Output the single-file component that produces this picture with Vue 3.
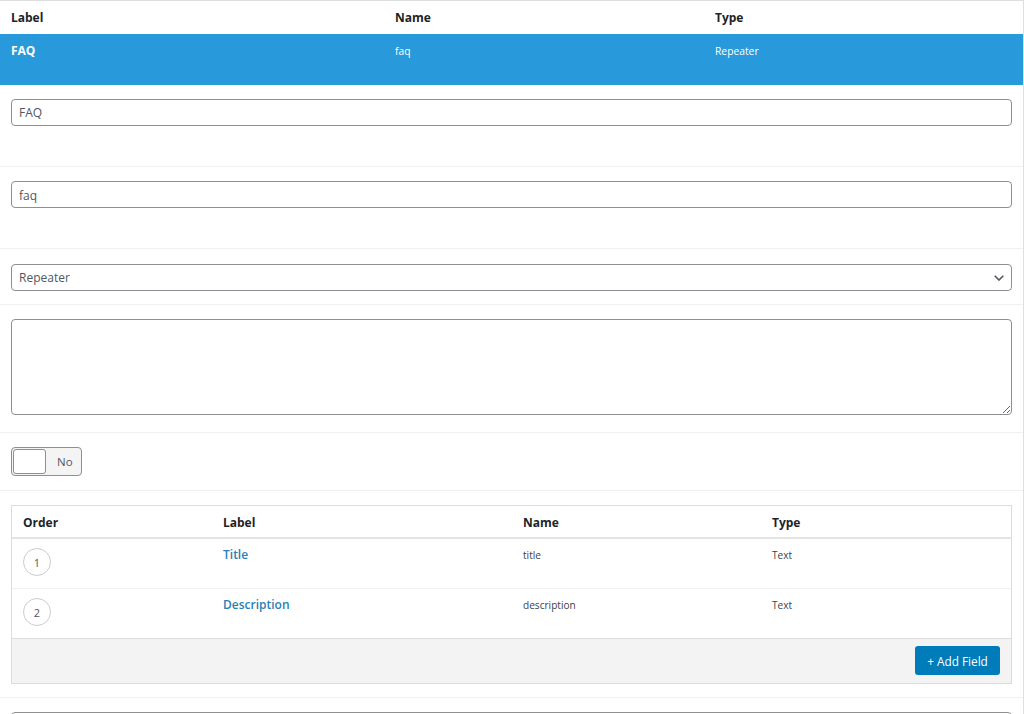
<script setup>
const fields = [
  { order: 1, label: 'Title', name: 'title', type: 'Text' },
  { order: 2, label: 'Description', name: 'description', type: 'Text' },
]
</script>

<template>
  <div class="page">
    <div class="top-head">
      <div>Label</div>
      <div>Name</div>
      <div>Type</div>
    </div>
    <div class="top-row">
      <div class="top-label">FAQ</div>
      <div>faq</div>
      <div>Repeater</div>
    </div>

    <div class="field tall">
      <input class="control" type="text" value="FAQ" />
    </div>
    <div class="field tall">
      <input class="control second" type="text" value="faq" />
    </div>
    <div class="field select-field">
      <div class="select-wrap">
        <select class="control select">
          <option>Repeater</option>
        </select>
        <svg class="chevron" viewBox="0 0 10 6" width="10" height="6">
          <path d="M.7.7 5 5 9.3.7" fill="none" stroke="#50575e" stroke-width="1.6" />
        </svg>
      </div>
    </div>
    <div class="field area-field">
      <textarea class="control area"></textarea>
    </div>
    <div class="field toggle-field">
      <div class="toggle">
        <span class="knob"></span>
        <span class="toggle-text">No</span>
      </div>
    </div>
    <div class="field table-field">
      <div class="table">
        <div class="t-row t-head">
          <div>Order</div>
          <div>Label</div>
          <div>Name</div>
          <div>Type</div>
        </div>
        <div v-for="f in fields" :key="f.order" class="t-row t-body">
          <div><span class="circle">{{ f.order }}</span></div>
          <div class="link-cell"><a class="link">{{ f.label }}</a></div>
          <div class="small">{{ f.name }}</div>
          <div class="small">{{ f.type }}</div>
        </div>
        <div class="t-foot">
          <button class="add" type="button">+ Add Field</button>
        </div>
      </div>
    </div>
    <div class="field last">
      <input class="control" type="text" />
    </div>
  </div>
</template>

<style>
html, body {
  background: #fff;
  overflow: hidden;
}
</style>

<style scoped>
.page {
  height: 714px;
  overflow: hidden;
  box-sizing: border-box;
  background: #fff;
  border-top: 1px solid #dfdfdf;
  border-right: 1px solid #dfdfdf;
  font-family: "Open Sans", "Noto Sans", sans-serif;
  color: #1d2327;
}
.top-head,
.top-row {
  display: grid;
  grid-template-columns: 384px 320px 1fr;
  padding-left: 11px;
}
.top-head {
  height: 33px;
  align-items: center;
  font-size: 12px;
  font-weight: 700;
  line-height: 34px;
}
.top-row {
  height: 51px;
  box-sizing: border-box;
  padding-top: 8px;
  background: #2899da;
  color: #fff;
  font-size: 10.3px;
  line-height: 18px;
}
.top-label {
  font-size: 12px;
  font-weight: 700;
}
.field {
  box-sizing: border-box;
  padding: 14px 11px;
  border-bottom: 1px solid #f0f0f1;
}
.field.tall {
  height: 82px;
}
.field.last {
  border-bottom: 0;
}
.control {
  display: block;
  box-sizing: border-box;
  width: 100%;
  height: 27px;
  margin: 0;
  padding: 0 7px;
  border: 1px solid #8c8f94;
  border-radius: 4px;
  background: #fff;
  color: #50575e;
  font-family: inherit;
  font-size: 12px;
  outline: none;
}
.second {
  padding-top: 1px;
}
.select-field {
  padding-top: 15px;
  padding-bottom: 13px;
}
.select-wrap {
  position: relative;
}
.select {
  appearance: none;
  -webkit-appearance: none;
}
.chevron {
  position: absolute;
  right: 8px;
  top: 11px;
}
.area-field {
  padding-bottom: 17px;
}
.area {
  height: 96px;
  padding: 4px 7px;
  resize: vertical;
}
.toggle-field {
  height: 58px;
}
.toggle {
  display: flex;
  align-items: center;
  box-sizing: border-box;
  width: 71px;
  height: 29px;
  padding: 1px;
  border: 1px solid #8c8f94;
  border-radius: 4px;
  background: #f4f4f5;
}
.knob {
  box-sizing: border-box;
  width: 33px;
  height: 25px;
  border: 1px solid #8c8f94;
  border-radius: 3px;
  background: #fff;
}
.toggle-text {
  margin-left: 11px;
  color: #50575e;
  font-size: 11.5px;
}
.table-field {
  padding-bottom: 13px;
}
.table {
  border: 1px solid #dcdcde;
}
.t-row {
  display: grid;
  grid-template-columns: 200px 300px 249px 1fr;
  padding-left: 11px;
}
.t-head {
  height: 33px;
  box-sizing: border-box;
  padding-top: 2px;
  align-items: center;
  border-bottom: 2px solid #e4e4e5;
  font-size: 12px;
  font-weight: 700;
}
.t-body {
  height: 50px;
  box-sizing: border-box;
  padding-top: 7px;
  border-bottom: 1px solid #f0f0f1;
}
.t-body:nth-child(3) {
  border-bottom-color: #dcdcde;
}
.circle {
  display: flex;
  align-items: center;
  justify-content: center;
  box-sizing: border-box;
  width: 28px;
  height: 28px;
  margin-top: 2px;
  border: 1px solid #ccc;
  border-radius: 50%;
  color: #50575e;
  font-size: 11px;
}
.link-cell {
  padding-top: 1px;
  line-height: 16px;
}
.link {
  display: block;
  color: #2a7fb5;
  font-size: 12px;
  font-weight: 600;
  line-height: 16px;
}
.small {
  padding-top: 0.5px;
  color: #3c434a;
  font-size: 10.1px;
  line-height: 17px;
}
.t-foot {
  display: flex;
  justify-content: flex-end;
  align-items: center;
  box-sizing: border-box;
  height: 44px;
  padding: 0 11px 1px 0;
  background: #f3f3f3;
}
.add {
  width: 85px;
  height: 29px;
  padding: 0;
  border: 0;
  border-radius: 3px;
  background: #007cba;
  color: #fff;
  font-family: inherit;
  font-size: 11.8px;
}
</style>
